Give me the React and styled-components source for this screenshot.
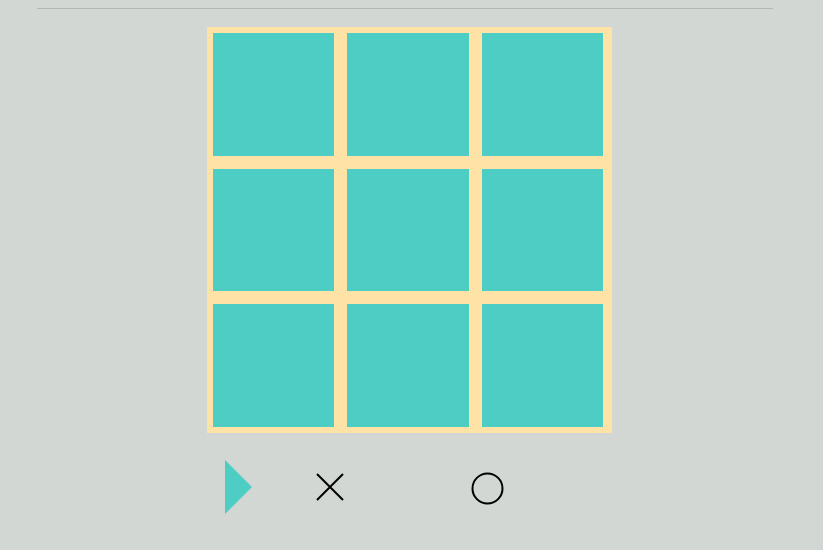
import React from 'react'
import styled, { createGlobalStyle } from 'styled-components'

const GlobalStyle = createGlobalStyle`
  html, body {
    margin: 0;
    padding: 0;
    background: #d2d7d3;
    font-family: "Liberation Sans", Arial, sans-serif;
  }
`

const Page = styled.div`
  width: 823px;
  height: 550px;
  padding-top: 8px;
  box-sizing: border-box;
`

const Rule = styled.div`
  margin-left: 37px;
  width: 736px;
  height: 1px;
  background: #b4b6b4;
`

const Board = styled.div`
  margin: 18px 0 0 207px;
  display: grid;
  grid-template-columns: 121px 122px 121px;
  grid-template-rows: 123px 122px 123px;
  gap: 13px;
  padding: 6px 9px 6px 6px;
  width: fit-content;
  background: #fee2a6;
`

const Cell = styled.button`
  border: none;
  padding: 0;
  margin: 0;
  background: #4ecdc4;
  cursor: pointer;
`

const Status = styled.div`
  display: flex;
  align-items: center;
  margin: 27px 0 0 225px;
  height: 54px;
`

const Turn = styled.div`
  width: 0;
  height: 0;
  border-top: 27px solid transparent;
  border-bottom: 27px solid transparent;
  border-left: 27px solid #4ecdc4;
  margin-right: ${p => p.$gap}px;
`

const Mark = styled.svg`
  display: block;
  margin-right: ${p => p.$gap || 0}px;
  margin-top: ${p => p.$drop || 0}px;
`

export default function App() {
  const cells = Array.from({ length: 9 })
  return (
    <Page>
      <GlobalStyle />
      <Rule />
      <Board>
        {cells.map((_, i) => (
          <Cell key={i} aria-label={`cell ${i + 1}`} />
        ))}
      </Board>
      <Status>
        <Turn $gap={64} />
        <Mark width="28" height="28" viewBox="0 0 28 28" $gap={127}>
          <path d="M1 1 L27 27 M27 1 L1 27" stroke="#000" strokeWidth="2" fill="none" />
        </Mark>
        <Mark width="33" height="33" viewBox="0 0 33 33" $drop={3}>
          <circle cx="16.5" cy="16.5" r="15" stroke="#000" strokeWidth="2" fill="none" />
        </Mark>
      </Status>
    </Page>
  )
}
